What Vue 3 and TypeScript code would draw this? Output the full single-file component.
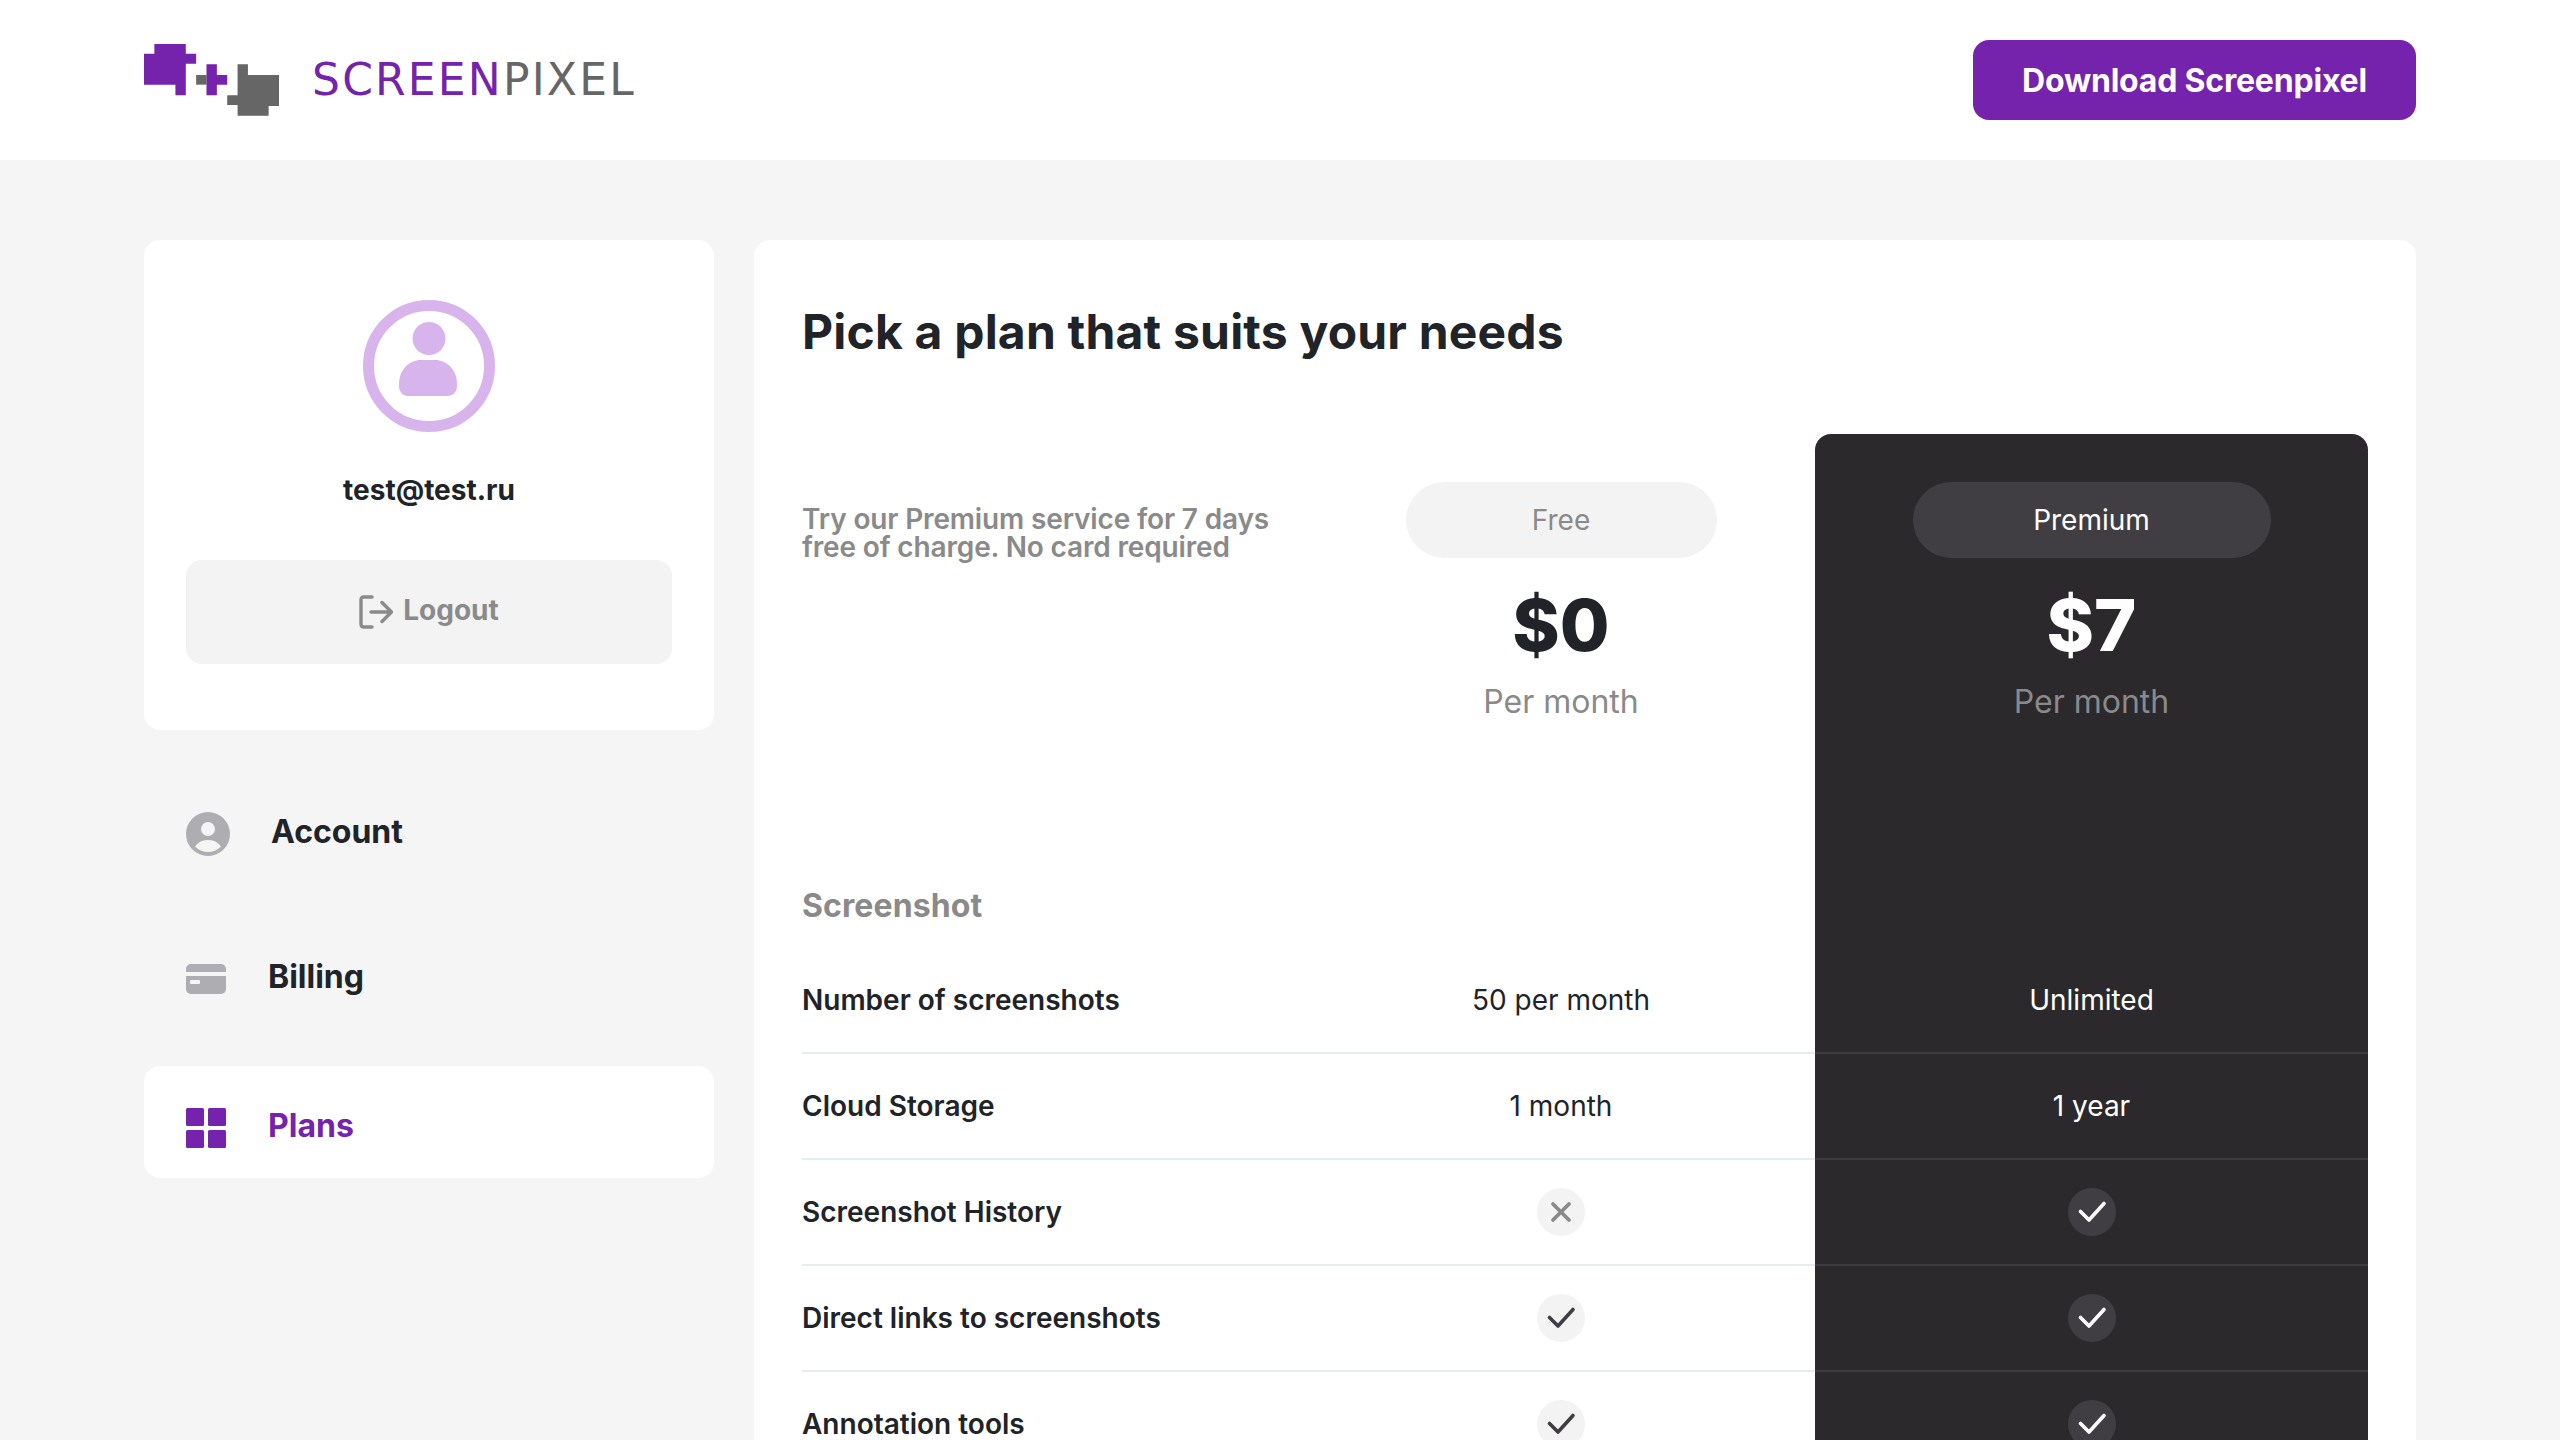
<script setup lang="ts">
interface PlanRow {
  label: string
  free: string | boolean
  premium: string | boolean
}

const rows: PlanRow[] = [
  { label: 'Number of screenshots', free: '50 per month', premium: 'Unlimited' },
  { label: 'Cloud Storage', free: '1 month', premium: '1 year' },
  { label: 'Screenshot History', free: false, premium: true },
  { label: 'Direct links to screenshots', free: true, premium: true },
  { label: 'Annotation tools', free: true, premium: true }
]
</script>

<template>
  <div class="page">
    <header class="topbar">
      <div class="logo">
        <svg class="logo-mark" viewBox="67 72 378 216" preserveAspectRatio="none">
          <path fill="#7522ac" d="M96 72H184V101H213V131H184V226H155V194H67V101H96Z" />
          <path fill="#666" d="M213 165H242V194H213Z" />
          <path fill="#7522ac" d="M242 133H271V165H300V194H271V226H242Z" />
          <path fill="#666" d="M329 133H358V165H445V258H416V287H329V255H300V226H329Z" />
        </svg>
        <span class="logo-text"><span class="logo-screen">SCREEN</span>PIXEL</span>
      </div>
      <button class="download">Download Screenpixel</button>
    </header>

    <div class="content">
      <aside class="sidebar">
        <section class="profile">
          <svg class="avatar" viewBox="0 0 132 132">
            <circle cx="66" cy="66" r="60.5" fill="none" stroke="#d8b4ec" stroke-width="11" />
            <circle cx="66" cy="38.5" r="16.5" fill="#d8b4ec" />
            <path fill="#d8b4ec" d="M36 84C36 70 46 60 58 60H72C84 60 94 70 94 84V86C94 92 90 96 84 96H45C40 96 36 92 36 86Z" />
          </svg>
          <div class="email">test@test.ru</div>
          <button class="logout">
            <svg class="logout-icon" viewBox="0 0 34 34" fill="none" stroke="#8a8a8a" stroke-width="3.4" stroke-linecap="round" stroke-linejoin="round">
              <path d="M13 2H5C3 2 2 3 2 5V29C2 31 3 32 5 32H13" />
              <path d="M12 17H32M23 7.5L32.5 17L23 26.5" />
            </svg>
            <span class="logout-label">Logout</span>
          </button>
        </section>

        <nav class="menu">
          <a class="menu-item">
            <svg class="icon-account" viewBox="0 0 44 44">
              <defs>
                <clipPath id="acc-clip"><circle cx="22" cy="22" r="18" /></clipPath>
              </defs>
              <circle cx="22" cy="22" r="22" fill="#aeaeb2" />
              <circle cx="22" cy="17" r="7" fill="#f5f5f5" />
              <ellipse cx="22" cy="39" rx="14" ry="11" fill="#f5f5f5" clip-path="url(#acc-clip)" />
            </svg>
            <span class="menu-label">Account</span>
          </a>
          <a class="menu-item">
            <svg class="icon-billing" viewBox="0 0 40 30">
              <rect width="40" height="30" rx="5" fill="#aeaeb2" />
              <rect y="8" width="40" height="4" fill="#f5f5f5" />
              <rect x="4" y="16" width="10" height="4" rx="1" fill="#f5f5f5" />
            </svg>
            <span class="menu-label">Billing</span>
          </a>
          <a class="menu-item active">
            <svg class="icon-plans" viewBox="0 0 40 40" fill="#7522ac">
              <rect width="18" height="18" rx="1.5" />
              <rect x="22" width="18" height="18" rx="1.5" />
              <rect y="22" width="18" height="18" rx="1.5" />
              <rect x="22" y="22" width="18" height="18" rx="1.5" />
            </svg>
            <span class="menu-label">Plans</span>
          </a>
        </nav>
      </aside>

      <main class="plans">
        <h1 class="title">Pick a plan that suits your needs</h1>

        <div class="grid head-row">
          <div class="intro">Try our Premium service for 7 days<br />free of charge. No card required</div>
          <div class="plan">
            <div class="pill pill-free">Free</div>
            <div class="price">$0</div>
            <div class="period">Per month</div>
          </div>
          <div class="plan plan-premium">
            <div class="pill pill-premium">Premium</div>
            <div class="price">$7</div>
            <div class="period">Per month</div>
          </div>
        </div>

        <div class="grid section-row">
          <div class="section-name">Screenshot</div>
          <div></div>
          <div class="dark"></div>
        </div>

        <div v-for="row in rows" :key="row.label" class="grid row">
          <div class="cell cell-label">{{ row.label }}</div>
          <div class="cell cell-value">
            <template v-if="typeof row.free === 'string'">{{ row.free }}</template>
            <span v-else class="mark">
              <svg viewBox="0 0 48 48" fill="none" stroke-linecap="round" stroke-linejoin="round">
                <path v-if="row.free" stroke="#403e43" stroke-width="3.6" d="M12.5 23.5L21 32L36 15.5" />
                <path v-else stroke="#8a8a8a" stroke-width="3.8" d="M16 16L32 32M32 16L16 32" />
              </svg>
            </span>
          </div>
          <div class="cell cell-value dark">
            <template v-if="typeof row.premium === 'string'">{{ row.premium }}</template>
            <span v-else class="mark mark-dark">
              <svg viewBox="0 0 48 48" fill="none" stroke-linecap="round" stroke-linejoin="round">
                <path stroke="#fff" stroke-width="3.6" d="M12.5 23.5L21 32L36 15.5" />
              </svg>
            </span>
          </div>
        </div>
      </main>
    </div>
  </div>
</template>

<style>
html,
body {
  margin: 0;
  background: #f5f5f5;
}
</style>

<style scoped>
.page {
  height: 1440px;
  overflow: hidden;
  background: #f5f5f5;
  font-family: Inter, "Noto Sans", sans-serif;
  color: #202328;
}

.topbar {
  height: 160px;
  box-sizing: border-box;
  padding: 0 144px;
  background: #fff;
  display: flex;
  align-items: center;
  justify-content: space-between;
}

.logo {
  display: flex;
  align-items: center;
}

.logo-mark {
  width: 135px;
  height: 72px;
}

.logo-text {
  margin-left: 33px;
  font-family: "DejaVu Sans", sans-serif;
  font-size: 44px;
  line-height: 52px;
  letter-spacing: 2.2px;
  color: #666;
}

.logo-screen {
  color: #7522ac;
}

.download {
  width: 443px;
  height: 80px;
  border: none;
  border-radius: 16px;
  background: #7522ac;
  color: #fff;
  font-family: inherit;
  font-size: 32px;
  font-weight: 700;
  letter-spacing: -0.2px;
}

.content {
  display: flex;
  gap: 40px;
  padding: 80px 144px 0;
}

.sidebar {
  width: 570px;
  flex: none;
}

.profile {
  background: #fff;
  border-radius: 16px;
  padding: 60px 42px 66px;
  display: flex;
  flex-direction: column;
  align-items: center;
}

.avatar {
  width: 132px;
  height: 132px;
}

.email {
  margin-top: 41px;
  font-size: 28px;
  font-weight: 700;
  line-height: 34px;
}

.logout {
  margin-top: 53px;
  width: 100%;
  height: 104px;
  border: none;
  border-radius: 16px;
  background: #f3f3f3;
  color: #8a8a8a;
  font-family: inherit;
  font-size: 28px;
  font-weight: 700;
  display: flex;
  align-items: center;
  justify-content: center;
  gap: 10px;
}

.logout-icon {
  width: 34px;
  height: 34px;
}

.logout-label {
  margin-top: -5px;
}

.menu {
  margin-top: 46px;
  display: flex;
  flex-direction: column;
  gap: 36px;
}

.menu-item {
  padding: 36px 42px;
  display: flex;
  align-items: center;
  gap: 42px;
  border-radius: 16px;
}

.menu-item.active {
  padding: 42px 42px 30px;
  background: #fff;
  color: #7522ac;
}

.menu-label {
  font-size: 32px;
  font-weight: 700;
  line-height: 30px;
  margin-top: -4px;
}

.icon-account {
  width: 44px;
  height: 44px;
  margin-right: -1px;
}

.icon-billing {
  width: 40px;
  height: 30px;
}

.icon-plans {
  width: 40px;
  height: 40px;
}

.plans {
  flex: 1;
  background: #fff;
  border-radius: 16px;
  padding: 62px 48px 0;
}

.title {
  margin: 0 0 72px;
  font-size: 48px;
  font-weight: 700;
  line-height: 60px;
  letter-spacing: 0.2px;
}

.grid {
  display: grid;
  grid-template-columns: 505px 508px 553px;
}

.intro {
  padding-top: 71px;
  font-size: 28px;
  font-weight: 600;
  line-height: 28px;
  letter-spacing: -0.15px;
  color: #8a8a8a;
}

.plan {
  padding: 48px 0 138px;
  display: flex;
  flex-direction: column;
  align-items: center;
}

.plan-premium {
  background: #2b292c;
  border-radius: 16px 16px 0 0;
  color: #fff;
}

.pill {
  height: 76px;
  border-radius: 38px;
  display: flex;
  align-items: center;
  justify-content: center;
  font-size: 28px;
}

.pill-free {
  width: 311px;
  background: #f3f3f3;
  color: #8a8a8a;
}

.pill-premium {
  width: 358px;
  background: #403e43;
}

.price {
  margin-top: 31px;
  font-size: 72px;
  font-weight: 800;
  line-height: 72px;
}

.period {
  margin-top: 21px;
  font-size: 32px;
  line-height: 40px;
  color: #8a8a8a;
}

.section-name {
  padding: 26px 0 22px;
  font-size: 32px;
  font-weight: 700;
  line-height: 40px;
  letter-spacing: 0.1px;
  color: #8a8a8a;
}

.dark {
  background: #2b292c;
  color: #fff;
}

.cell {
  height: 106px;
  box-sizing: border-box;
  border-bottom: 2px solid #e8ecef;
  display: flex;
  align-items: center;
  font-size: 28px;
}

.cell-label {
  font-weight: 600;
}

.cell-value {
  justify-content: center;
}

.cell.dark {
  border-bottom-color: #3e3c40;
}

.mark {
  width: 48px;
  height: 48px;
  border-radius: 50%;
  background: #f3f3f3;
}

.mark svg {
  display: block;
  width: 48px;
  height: 48px;
}

.mark-dark {
  background: #403e43;
}
</style>
